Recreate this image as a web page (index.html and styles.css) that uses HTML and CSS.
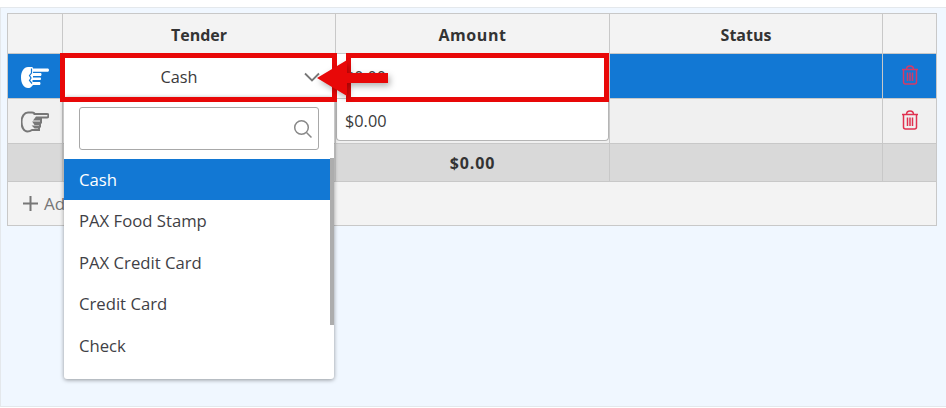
FILE: index.html
```html
<!DOCTYPE html>
<html lang="en">
<head>
<meta charset="utf-8">
<title>Tender</title>
<link rel="stylesheet" href="styles.css">
</head>
<body>
<div class="panel">
  <div class="table">
    <div class="cell head"></div>
    <div class="cell head"><span class="label">Tender</span></div>
    <div class="cell head"><span class="label wide">Amount</span></div>
    <div class="cell head"><span class="label">Status</span></div>
    <div class="cell head last"></div>

    <div class="cell sel">
      <svg class="hand" width="28" height="22" viewBox="0 0 28 22"><path class="fill" d="M7 1h3.500c1 0 1.500 .5 1.500 1.500h14.500c.9 0 1.500 .6 1.500 1.500s-.6 1.800-1.500 1.800H12v1.200h7.500c.8 0 1 .6 1 1.400s-.4 1.600-1 1.600H12v1.500h7c.6 0 1 .5 1 1.200s-.4 1.300-1 1.300h-7.500v2h7c.6 0 1 .6 1 1.500s-.4 1.500-1 1.500H12C10 21.500 9 22 7 22 3 22 0 17.500 0 11.500S3 1 7 1z"/><path class="cut" d="M10.500 2.500V7L8.500 9.500l1.500 2.500-1.500 2.500L11 17.500"/></svg>
    </div>
    <div class="cell white"><span class="value">Cash</span><svg class="chev" width="16" height="10" viewBox="0 0 16 10"><path d="M1 1.500l7 7 7-7"/></svg></div>
    <div class="cell white left"></div>
    <div class="cell sel"></div>
    <div class="cell sel last"><svg class="trash on-blue" width="18" height="20" viewBox="0 0 18 20"><path d="M1 4.500h16M5.500 4.500C5.500 2 7 1 9 1s3.500 1 3.500 3.500M2.500 4.500V17c0 1.200 .8 2 2 2h9c1.200 0 2-.8 2-2V4.500M6.500 7.500v8.500M9 7.500v8.500M11.500 7.500v8.500"/></svg></div>

    <div class="cell row2">
      <svg class="hand outline" width="28" height="22" viewBox="0 0 28 22"><path d="M7 1.500h4c1.500 0 2.500 .7 2.500 1.500H26c1 0 1.500 .6 1.500 1.500S27 6.500 26 6.500H15.500l-1.500 2h6v3h-7l1 1.500h5v2.500h-6l1 1h4v2.500h-7c-1.500 1-3 1.500-4.500 1.500-3.500 0-6-4-6-9.500S3.500 1.500 7 1.500z"/></svg>
    </div>
    <div class="cell row2"></div>
    <div class="cell row2 amount"><div class="amount-input">$0.00</div></div>
    <div class="cell row2"></div>
    <div class="cell row2 last"><svg class="trash" width="18" height="20" viewBox="0 0 18 20"><path d="M1 4.500h16M5.500 4.500C5.500 2 7 1 9 1s3.500 1 3.500 3.500M2.500 4.500V17c0 1.200 .8 2 2 2h9c1.200 0 2-.8 2-2V4.500M6.500 7.500v8.500M9 7.500v8.500M11.500 7.500v8.500"/></svg></div>

    <div class="cell foot"></div>
    <div class="cell foot"></div>
    <div class="cell foot strong">$0.00</div>
    <div class="cell foot"></div>
    <div class="cell foot last"></div>

    <div class="add"><svg class="plus" width="15" height="15" viewBox="0 0 15 15"><path d="M7.500 0v15M0 7.500h15"/></svg>Add</div>
  </div>

  <div class="dropdown">
    <div class="search">
      <svg width="20" height="20" viewBox="0 0 20 20"><circle cx="8.500" cy="8.500" r="6.800"/><path d="M13.500 13.500l5 5"/></svg>
    </div>
    <ul class="options">
      <li class="active">Cash</li>
      <li>PAX Food Stamp</li>
      <li>PAX Credit Card</li>
      <li>Credit Card</li>
      <li>Check</li>
    </ul>
    <div class="scrollbar"></div>
  </div>

  <div class="mark mark-tender"></div>
  <div class="amount-ghost">$0.00</div>
  <div class="mark mark-amount"></div>
  <svg class="arrow" width="76" height="40" viewBox="0 0 76 40"><path d="M0 20L30 2v13h41v10H30v13z"/></svg>
</div>
</body>
</html>
```

FILE: styles.css
```css
* { box-sizing: border-box; }
html, body { margin: 0; padding: 0; background: #fff; }
body {
  width: 946px;
  height: 408px;
  overflow: hidden;
  font-family: "Open Sans", "Noto Sans", sans-serif;
  font-size: 16px;
  color: #3a3a3a;
}
.panel {
  position: relative;
  margin-top: 7px;
  width: 948px;
  height: 400px;
  padding: 5px 6px 0;
  background: #f0f7ff;
  border: 1px solid #e4e8ec;
}
.table {
  display: grid;
  grid-template-columns: 55px 273px 274px 273px 53px;
  grid-template-rows: 40px 45px 45px 38px 43px;
  width: 930px;
  border: 1px solid #c8c8c8;
  background: #f3f3f3;
}
.cell {
  display: flex;
  align-items: center;
  justify-content: center;
  border-right: 1px solid #c8c8c8;
  border-bottom: 1px solid #c8c8c8;
}
.cell.last { border-right: 0; }
.head { font-weight: 700; color: #333; }
.label { position: relative; top: 1px; }
.wide { letter-spacing: .6px; }
.sel { background: #1278d4; }
.white { background: #fff; position: relative; }
.value { position: relative; left: -20px; top: 1px; font-size: 16.300px; }
.chev { position: absolute; right: 15px; top: 18px; fill: none; stroke: #777; stroke-width: 1.800; }
.row2 { background: #f0f0f0; }
.amount { align-items: flex-start; }
.amount-input {
  width: 100%;
  height: 43px;
  margin-top: -1px;
  padding: 11px 8px 0;
  background: #fff;
  border-radius: 0 0 4px 4px;
  border: 1px solid #b5b5b5;
  border-top: 0;
  line-height: 24px;
  font-size: 16.300px;
}
.foot { background: #d9d9d9; }
.strong { font-weight: 700; color: #333; letter-spacing: .9px; }
.add {
  grid-column: 1 / -1;
  display: flex;
  align-items: center;
  padding-left: 15px;
  color: #777;
  background: #f3f3f3;
  font-size: 17px;
}
.plus { fill: none; stroke: #777; stroke-width: 2; margin-right: 6px; }
.hand { display: block; margin-top: 1px; }
.hand .fill { fill: #fff; }
.hand .cut { fill: none; stroke: #1278d4; stroke-width: 1.200; }
.hand.outline { fill: none; stroke: #777; stroke-width: 2; }
.trash { fill: none; stroke: #e0304f; stroke-width: 1.500; margin-top: -3px; }
.trash.on-blue { stroke: #d63a66; }

.dropdown {
  position: absolute;
  left: 63px;
  top: 89px;
  width: 270px;
  height: 282px;
  padding-top: 10px;
  background: #fff;
  border-radius: 3px;
  box-shadow: 0 1px 4px rgba(0, 0, 0, .4);
}
.search {
  display: flex;
  align-items: center;
  justify-content: flex-end;
  width: 240px;
  height: 43px;
  margin: 0 0 9px 15px;
  padding-right: 5px;
  border: 1px solid #a8a8a8;
  border-radius: 3px;
}
.search svg { fill: none; stroke: #888; stroke-width: 1.500; }
.options { list-style: none; margin: 0; padding: 0; font-size: 16.700px; }
.options li {
  height: 41.400px;
  line-height: 42px;
  padding-left: 15px;
  color: #3f3f46;
}
.options .active { background: #1278d4; color: #fff; }
.scrollbar {
  position: absolute;
  right: 0;
  top: 61px;
  width: 4px;
  height: 167px;
  background: #adadad;
}
.mark {
  position: absolute;
  top: 45px;
  height: 49px;
  border: 5px solid #e80808;
}
.mark-tender { left: 59px; width: 277px; }
.mark-amount { left: 345px; width: 263px; }
.amount-ghost {
  position: absolute;
  left: 344px;
  top: 57px;
  line-height: 24px;
  color: #444;
}
.arrow {
  position: absolute;
  left: 316px;
  top: 50px;
  fill: #e80808;
  filter: drop-shadow(2px 3px 3px rgba(0, 0, 0, .3));
}
```
